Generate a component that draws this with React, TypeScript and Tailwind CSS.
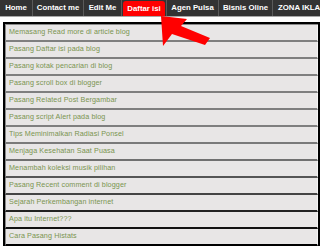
import React from "react";

const items = [
  "Memasang Read more di article blog",
  "Pasang Daftar isi pada blog",
  "Pasang kotak pencarian di blog",
  "Pasang scroll box di blogger",
  "Pasang Related Post Bergambar",
  "Pasang script Alert pada blog",
  "Tips Meminimalkan Radiasi Ponsel",
  "Menjaga Kesehatan Saat Puasa",
  "Menambah koleksi musik pilihan",
  "Pasang Recent comment di blogger",
  "Sejarah Perkembangan internet",
  "Apa itu Internet???",
  "Cara Pasang Histats",
];

const borderCls = [
  "border-b-[#7f7f7f]",
  "border-b-[#7f7f7f]",
  "border-b-[#7f7f7f]",
  "border-b-[#7f7f7f]",
  "border-b-[#7f7f7f]",
  "border-b-[#7f7f7f]",
  "border-b-[#7a7a7a]",
  "border-b-[#707070]",
  "border-b-[#555555]",
  "border-b-[#444444]",
  "border-b-[#222222]",
  "border-b-[#111111]",
  "border-b-[#000000]",
];

export default function App() {
  return (
    <div
      className="relative w-[320px] h-[250px] overflow-hidden bg-white"
      style={{ fontFamily: '"Liberation Sans", Arial, sans-serif' }}
    >
      {/* Nav bar */}
      <div className="flex h-[16px] bg-[#333333] text-white font-bold text-[7.8px] leading-none">
        <div className="w-[33px] shrink-0 flex items-center justify-center border-r border-[#5a5a5a]">Home</div>
        <div className="w-[51px] shrink-0 flex items-center justify-center border-r border-[#5a5a5a]">Contact me</div>
        <div className="w-[38px] shrink-0 flex items-center justify-center border-r border-[#5a5a5a]">Edit Me</div>
        <div className="w-[44px] shrink-0 flex items-start pt-[1px]">
          <div className="ml-[1px] w-[42px] h-full bg-[#ff0000] rounded-t-[3px] flex items-center justify-center">Daftar isi</div>
        </div>
        <div className="w-[53px] shrink-0 flex items-center justify-center border-r border-l border-[#5a5a5a]">Agen Pulsa</div>
        <div className="w-[54px] shrink-0 flex items-center justify-center border-r border-[#5a5a5a]">Bisnis Oline</div>
        <div className="flex-1 flex items-center pl-[5px] whitespace-nowrap overflow-hidden">ZONA IKLA</div>
      </div>
      <div className="h-[1px] bg-[#a8a8a8]" />

      {/* List */}
      <div className="mt-[5px] ml-[3px] w-[317px] border-t-2 border-l-2 border-r-2 border-black">
        <div className="border-t border-[#8a8a8a]">
          {items.map((t, i) => (
            <div
              key={i}
              className={`h-[17px] border-b-2 ${borderCls[i]} border-l border-l-[#8a8a8a] border-r border-r-[#f4f4f4] bg-[#e8e6e6] flex items-center pl-[3px] text-[7.2px] tracking-[0.1px] text-[#7a9450] whitespace-nowrap`}
            >
              {t}
            </div>
          ))}
        </div>
      </div>

      {/* Red arrow */}
      <svg className="absolute left-0 top-0" width="320" height="250" viewBox="0 0 320 250">
        <polygon
          points="161,16 187,19 181,26 210,38 205,45 172,34 163,46"
          fill="#ff0000"
        />
      </svg>
    </div>
  );
}
